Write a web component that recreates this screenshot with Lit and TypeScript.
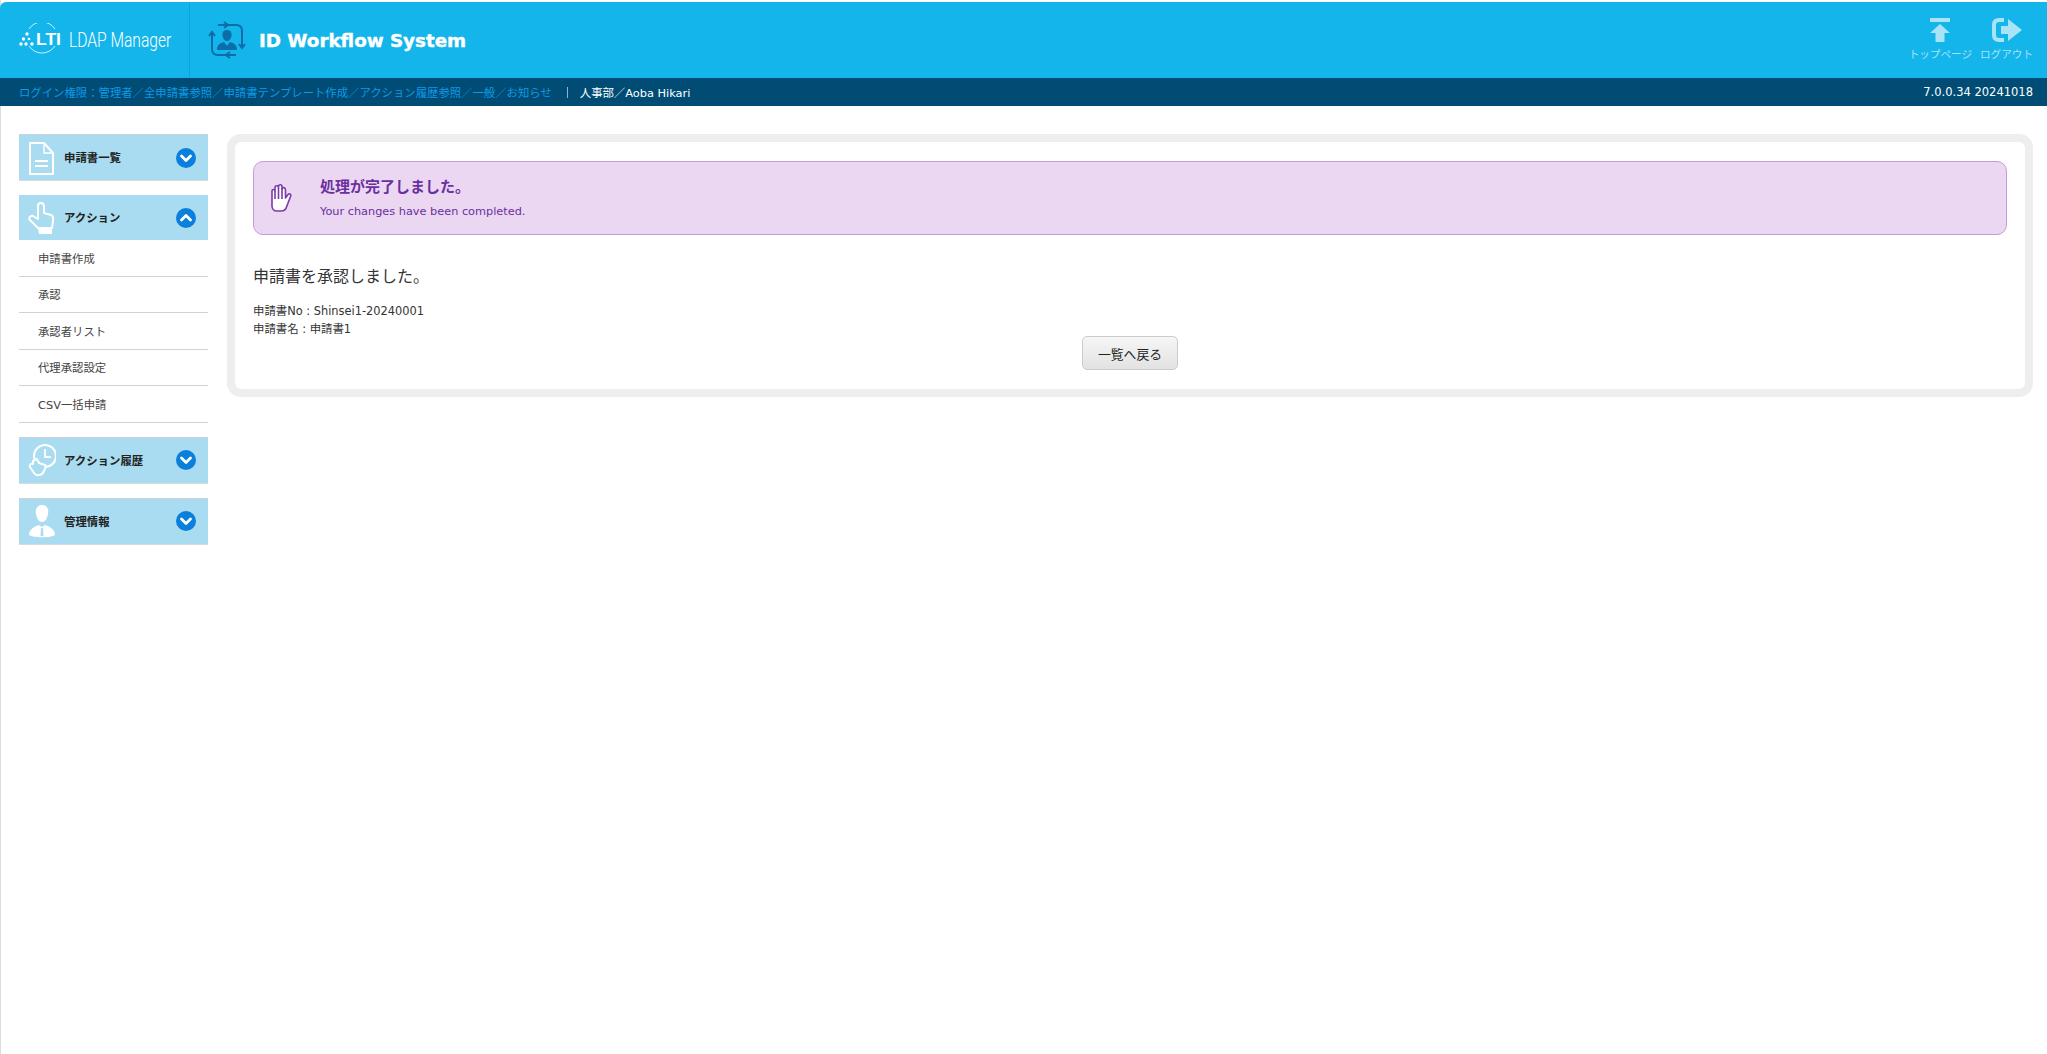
import { LitElement, html, css, svg } from 'lit';
import { customElement } from 'lit/decorators.js';

const chevron = (up: boolean) => html`<svg class="chev" viewBox="0 0 20 20">
  <circle cx="10" cy="10" r="10" fill="#0b7fdc"></circle>
  <path d="${up ? 'M5.5 12 L10 7.5 L14.5 12' : 'M5.5 8 L10 12.5 L14.5 8'}" fill="none" stroke="#fff" stroke-width="2.8" stroke-linecap="round" stroke-linejoin="round"></path>
</svg>`;

const icons: Record<string, unknown> = {
  doc: svg`<path d="M2 2 H16 L25 12 V33 H2 Z" fill="none" stroke="#fff" stroke-width="2" stroke-linejoin="round"/>
    <path d="M16 2 V12 H25" fill="none" stroke="#fff" stroke-width="1.4"/>
    <path d="M7 20 H20 M7 25 H20" stroke="#fff" stroke-width="1.8"/>`,
  hand: svg`<path d="M13 2 C15 2 16 4 16 6 V12 L23 14 C26 15 25 18 25 20 L24 27 H10 L2 19 C0 17 3 14 5 15 L10 18 V5 C10 3 11 2 13 2 Z" fill="none" stroke="#fff" stroke-width="2" stroke-linejoin="round"/>
    <path d="M10 28 H24 V33 H11 Z" fill="#fff"/>`,
  clock: svg`<circle cx="17" cy="13" r="11" fill="none" stroke="#fff" stroke-width="2"/>
    <path d="M17 6 V14 H23" fill="none" stroke="#fff" stroke-width="1.8"/>
    <path d="M5 18 L9 16 L11 20 L17 22 C19 24 16 27 15 30 C12 33 8 33 6 30 L2 24 C1 22 3 20 5 21 Z" fill="#a9dcf0" stroke="#fff" stroke-width="2" stroke-linejoin="round"/>`,
  person: svg`<path d="M14 1 C19 1 21 5 20 10 C19 15 17 18 14 18 C11 18 9 15 8 10 C7 5 9 1 14 1 Z" fill="#fff"/>
    <path d="M1 31 C1 26 5 23 11 21 L14 23 L17 21 C23 23 27 26 27 31 C23 34 5 34 1 31 Z" fill="#fff"/>
    <path d="M13 24 H15 L15.5 32 H12.5 Z" fill="#a9dcf0"/>`,
};

const navIcon = (name: string) =>
  html`<svg class="nav-icon" viewBox="0 0 28 34">${icons[name]}</svg>`;

@customElement('nav-head')
class NavHead extends LitElement {
  static properties = {
    label: { type: String },
    icon: { type: String },
    open: { type: Boolean },
  };
  declare label: string;
  declare icon: string;
  declare open: boolean;

  static styles = css`
    :host {
      display: flex;
      align-items: center;
      height: 47px;
      box-sizing: border-box;
      background: #a9dcf0;
      border-top: 1px solid #c9d3d8;
      border-bottom: 1px solid #d5dcdf;
    }
    :host([open]) {
      height: 45px;
      border-color: #a9dcf0;
    }
    .nav-icon {
      width: 28px;
      height: 34px;
      margin-left: 9px;
      flex: none;
    }
    .label {
      margin: -1px 0 0 8px;
      flex: 1;
      font-size: 11.4px;
      font-weight: 700;
      color: #222;
    }
    .chev {
      width: 20px;
      height: 20px;
      margin-right: 12px;
      flex: none;
    }
  `;

  render() {
    return html`${navIcon(this.icon)}<span class="label">${this.label}</span>${chevron(this.open)}`;
  }
}

@customElement('app-root')
class AppRoot extends LitElement {
  static styles = css`
    :host {
      display: block;
      height: 1054px;
      background: #fff;
      font-family: "DejaVu Sans", "Noto Sans CJK JP", sans-serif;
      color: #333;
      overflow: hidden;
    }
    .frame {
      height: 100%;
      box-sizing: border-box;
      padding-top: 2px;
      border-left: 1px solid #ddd;
    }
    .head {
      height: 76px;
      background: #14b5ea;
      border-top-left-radius: 6px;
      margin-left: -1px;
      display: flex;
      align-items: center;
    }
    .brand {
      width: 190px;
      height: 100%;
      flex: none;
      display: flex;
      align-items: center;
      padding-left: 19px;
      box-sizing: border-box;
      border-right: 1px solid #0fa3dc;
      color: #fff;
    }
    .logo {
      width: 50px;
      height: 34px;
      flex: none;
    }
    .logo text {
      font-family: "Liberation Sans", sans-serif;
      font-weight: 700;
      font-size: 17px;
      fill: #fff;
    }
    .brand-name {
      font-family: Roboto, sans-serif;
      font-weight: 300;
      font-size: 20px;
      white-space: nowrap;
      display: inline-block;
      transform: scaleX(0.78);
      transform-origin: left center;
    }
    .sys-icon {
      width: 38px;
      height: 38px;
      margin-left: 18px;
      flex: none;
    }
    .sys-name {
      margin-left: 13px;
      font-family: "DejaVu Sans", sans-serif;
      font-weight: 700;
      font-size: 18.3px;
      -webkit-text-stroke: 0.4px #fff;
      color: #fff;
      flex: 1;
    }
    .tools {
      display: flex;
      gap: 8px;
      padding-right: 14px;
    }
    .tool {
      display: flex;
      flex-direction: column;
      align-items: center;
      gap: 4px;
      font-size: 10.6px;
      color: #a9e3f8;
      margin-top: -1px;
    }
    .tool svg {
      height: 24px;
    }
    .tool svg.up {
      width: 20px;
    }
    .tool svg.out {
      width: 30px;
    }
    .bar {
      height: 28px;
      background: #004c75;
      margin-left: -1px;
      padding: 0 14px 0 19px;
      display: flex;
      align-items: center;
      font-size: 11.36px;
      white-space: nowrap;
    }
    .roles {
      color: #1099e4;
    }
    .sep {
      width: 1px;
      height: 11px;
      background: #8fb4c8;
      margin: 0 12px 0 15px;
    }
    .user {
      color: #fff;
      flex: 1;
    }
    .ver {
      color: #fff;
      font-size: 11.5px;
    }
    .body {
      display: flex;
      gap: 19px;
      padding: 28px 14px 0 18px;
      align-items: flex-start;
    }
    .side {
      width: 189px;
      flex: none;
      display: flex;
      flex-direction: column;
    }
    nav-head {
      margin-bottom: 14px;
    }
    nav-head[open] {
      margin-bottom: 0;
    }
    .sub {
      margin-bottom: 14px;
      font-size: 11.36px;
    }
    .sub div {
      height: 36.5px;
      box-sizing: border-box;
      border-bottom: 1px solid #d2d2d2;
      padding-left: 19px;
      display: flex;
      align-items: center;
      color: #444;
    }
    .panel {
      flex: 1;
      min-width: 0;
      height: 263px;
      box-sizing: border-box;
      border: 8px solid #eee;
      border-radius: 14px;
      padding: 19px 18px 0 18px;
      display: flex;
      flex-direction: column;
    }
    .alert {
      height: 74px;
      box-sizing: border-box;
      background: #ebd7f2;
      border: 1px solid #c79bd8;
      border-radius: 10px;
      display: flex;
      align-items: center;
      color: #6a2fa0;
    }
    .alert svg {
      width: 24px;
      height: 32px;
      margin-left: 14px;
      flex: none;
    }
    .alert-txt {
      margin-left: 28px;
    }
    .alert h3 {
      margin: -4px 0 9px;
      font-size: 15px;
      font-weight: 700;
    }
    .alert p {
      margin: 0;
      font-size: 11.3px;
    }
    h2 {
      margin: 30px 0 0 0;
      font-size: 16px;
      font-weight: 400;
      line-height: 24px;
    }
    .info {
      margin-top: 13px;
      font-size: 11.4px;
      line-height: 18px;
    }
    .actions {
      display: flex;
      justify-content: center;
      margin-top: -2px;
    }
    button {
      width: 96px;
      height: 34px;
      border: 1px solid #ccc;
      border-radius: 5px;
      background: linear-gradient(#f6f6f6, #e2e2e2);
      font: 400 12.8px "DejaVu Sans", "Noto Sans CJK JP", sans-serif;
      color: #222;
      padding: 0;
    }
  `;

  render() {
    return html`<div class="frame">
      <div class="head">
        <div class="brand">
          <svg class="logo" viewBox="0 0 50 34">
            <path d="M10 6 A15.5 15.5 0 0 1 36 6 M10 23 A15.5 15.5 0 0 0 36 23" fill="none" stroke="#fff" stroke-width="0.8"></path>
            <g fill="#fff">
              <circle cx="2" cy="21" r="1.7"></circle><circle cx="7" cy="21" r="1.7"></circle>
              <circle cx="13" cy="21" r="1.7"></circle><circle cx="4.5" cy="16" r="1.7"></circle>
              <circle cx="10" cy="16" r="1.3"></circle><circle cx="8" cy="11" r="1.7"></circle>
            </g>
            <text x="17" y="22" textLength="25" lengthAdjust="spacingAndGlyphs">LTI</text>
          </svg>
          <span class="brand-name">LDAP Manager</span>
        </div>
        <svg class="sys-icon" viewBox="0 0 38 38" fill="none" stroke="#0b6ea8" stroke-width="2">
          <path d="M10 4 H28 C32 4 34 6 34 10 V26 M28 34 H10 C6 34 4 32 4 28 V12"></path>
          <path d="M16 1 L20 4 L16 7 M31 23 L34 27 L37 23 M22 31 L18 34 L22 37 M1 15 L4 11 L7 15"></path>
          <path d="M19 9 C22 9 24 11 23.5 15 C23 18 21 20 19 20 C17 20 15 18 14.5 15 C14 11 16 9 19 9 Z" fill="#0b6ea8" stroke="none"></path>
          <path d="M9 29 C9 24 12 22 16 21 L19 25 L22 21 C26 22 29 24 29 29 Z" fill="#0b6ea8" stroke="none"></path>
        </svg>
        <div class="sys-name">ID Workflow System</div>
        <div class="tools">
          <div class="tool">
            <svg class="up" viewBox="0 0 20 24" fill="#a9e3f8">
              <rect x="0" y="0" width="20" height="4"></rect>
              <path d="M10 6 L20 15 H14.5 V24 H5.5 V15 H0 Z"></path>
            </svg>
            トップページ
          </div>
          <div class="tool">
            <svg class="out" viewBox="0 0 30 24" fill="#a9e3f8">
              <path d="M12 2 H7 C3 2 2 4 2 7 V17 C2 20 3 22 7 22 H12" fill="none" stroke="#a9e3f8" stroke-width="4"></path>
              <path d="M9 8 H16 V1 L30 12 L16 23 V16 H9 Z"></path>
            </svg>
            ログアウト
          </div>
        </div>
      </div>
      <div class="bar">
        <span class="roles">ログイン権限：管理者／全申請書参照／申請書テンプレート作成／アクション履歴参照／一般／お知らせ</span>
        <span class="sep"></span>
        <span class="user">人事部／Aoba Hikari</span>
        <span class="ver">7.0.0.34 20241018</span>
      </div>
      <div class="body">
        <div class="side">
          <nav-head label="申請書一覧" icon="doc"></nav-head>
          <nav-head label="アクション" icon="hand" open></nav-head>
          <div class="sub">
            <div>申請書作成</div>
            <div>承認</div>
            <div>承認者リスト</div>
            <div>代理承認設定</div>
            <div>CSV一括申請</div>
          </div>
          <nav-head label="アクション履歴" icon="clock"></nav-head>
          <nav-head label="管理情報" icon="person"></nav-head>
        </div>
        <div class="panel">
          <div class="alert">
            <svg viewBox="0 0 24 32" fill="#fff" stroke="#7a3aa8" stroke-width="1.6" stroke-linejoin="round">
              <path d="M4 18 V9 C4 7 7 7 7 9 V6 C7 3 10.5 3 10.5 6 V5 C10.5 2 14 2 14 5 V7 C14 5 17.5 5 17.5 8 V16 L20 12.5 C21.5 11 23.5 12.5 22.5 14.5 L18.5 25 C18 27 16 29 13 29 H9 C6 29 4 27 4 24 Z"></path>
              <path d="M7 9 V17 M10.5 6 V17 M14 6 V17" fill="none"></path>
            </svg>
            <div class="alert-txt">
              <h3>処理が完了しました。</h3>
              <p>Your changes have been completed.</p>
            </div>
          </div>
          <h2>申請書を承認しました。</h2>
          <div class="info">申請書No : Shinsei1-20240001<br />申請書名 : 申請書1</div>
          <div class="actions"><button>一覧へ戻る</button></div>
        </div>
      </div>
    </div>`;
  }
}
